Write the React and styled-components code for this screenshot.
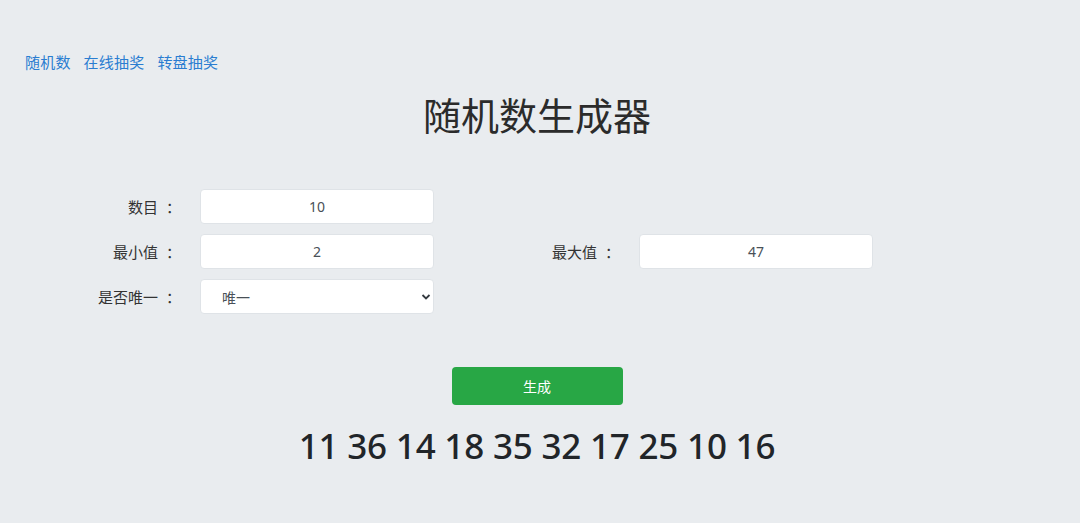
import React, { useState } from 'react';
import styled, { createGlobalStyle } from 'styled-components';

const GlobalStyle = createGlobalStyle`
  html, body {
    margin: 0;
    padding: 0;
    background: #e9ecef;
    font-family: "Noto Sans", "Noto Sans CJK SC", sans-serif;
    color: #212529;
  }
`

const Page = styled.div`
  min-height: 523px;
  padding: 50px 6px 0 0;
  box-sizing: border-box;
`

const Nav = styled.nav`
  display: flex;
  gap: 13px;
  padding-left: 25px;
  height: 22px;
  align-items: center;
`

const NavLink = styled.a`
  color: #2a7dd1;
  font-size: 15px;
  font-family: "Noto Sans CJK SC", sans-serif;
  text-decoration: none;
  letter-spacing: 0.2px;
`

const Title = styled.h1`
  margin: 17px 0 0;
  text-align: center;
  font-family: "Noto Sans CJK SC", sans-serif;
  font-weight: 400;
  font-size: 38px;
  line-height: 50px;
  color: #2b2b2b;
`

const Form = styled.div`
  display: grid;
  grid-template-columns: 173px 234px 151px 234px;
  column-gap: 27px;
  row-gap: 10px;
  margin-top: 50px;
`

const Label = styled.label`
  grid-column: ${p => p.col};
  text-align: right;
  align-self: center;
  font-size: 15px;
  font-family: "Noto Sans CJK SC", sans-serif;
  color: #333;
`

const Colon = styled.span`
  position: relative;
  left: 8px;
`

const Input = styled.input`
  grid-column: ${p => p.col};
  box-sizing: border-box;
  height: 35px;
  border: 1px solid #dfe3e7;
  border-radius: 4px;
  background: #fff;
  text-align: center;
  font-size: 14px;
  font-family: "Noto Sans", sans-serif;
  color: #495057;
  outline: none;
`

const SelectWrap = styled.div`
  grid-column: 2;
  position: relative;
  height: 35px;
`

const Select = styled.select`
  appearance: none;
  box-sizing: border-box;
  width: 100%;
  height: 35px;
  border: 1px solid #dfe3e7;
  border-radius: 4px;
  background: #fff;
  padding-left: 21px;
  font-size: 14px;
  font-family: "Noto Sans CJK SC", sans-serif;
  color: #495057;
  outline: none;
`

const Chevron = styled.svg`
  position: absolute;
  right: 3px;
  top: 14px;
  pointer-events: none;
`

const Actions = styled.div`
  display: flex;
  flex-direction: column;
  align-items: center;
  margin-top: 53px;
`

const Button = styled.button`
  width: 171px;
  height: 38px;
  border: none;
  border-radius: 4px;
  background: #28a745;
  color: #fff;
  font-size: 14px;
  font-family: "Noto Sans CJK SC", sans-serif;
  cursor: pointer;
`

const Result = styled.div`
  margin-top: 19px;
  font-size: 35px;
  font-weight: 500;
  line-height: 44px;
  color: #212529;
  letter-spacing: -0.2px;
`

const App = () => {
    const [numbers] = useState([11, 36, 14, 18, 35, 32, 17, 25, 10, 16]);

    return (
        <Page>
            <GlobalStyle />
            <Nav>
                <NavLink href="#">随机数</NavLink>
                <NavLink href="#">在线抽奖</NavLink>
                <NavLink href="#">转盘抽奖</NavLink>
            </Nav>
            <Title>随机数生成器</Title>
            <Form>
                <Label col={1}>数目<Colon>：</Colon></Label>
                <Input col={2} defaultValue="10" />
                <Label col={1}>最小值<Colon>：</Colon></Label>
                <Input col={2} defaultValue="2" />
                <Label col={3}>最大值<Colon>：</Colon></Label>
                <Input col={4} defaultValue="47" />
                <Label col={1}>是否唯一<Colon>：</Colon></Label>
                <SelectWrap>
                    <Select defaultValue="1">
                        <option value="1">唯一</option>
                        <option value="0">不唯一</option>
                    </Select>
                    <Chevron width="10" height="8" viewBox="0 0 10 8">
                        <path d="M1.5 2 L5 5.5 L8.5 2" fill="none" stroke="#343a40" strokeWidth="1.8" />
                    </Chevron>
                </SelectWrap>
            </Form>
            <Actions>
                <Button>生成</Button>
                <Result>{numbers.join(' ')}</Result>
            </Actions>
        </Page>
    );
}

export default App;
